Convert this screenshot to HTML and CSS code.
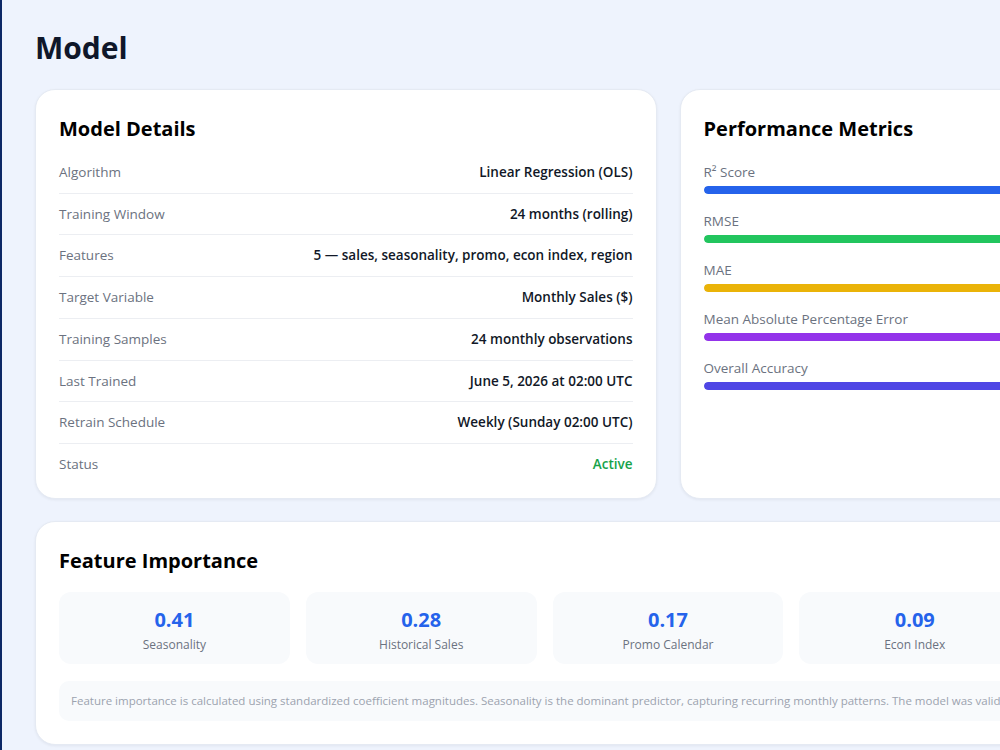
FILE: index.html
```html
<!DOCTYPE html>
<html lang="en">
<head>
    <meta charset="UTF-8">
    <meta name="viewport" content="width=device-width, initial-scale=1.0">
    <title>Model</title>
    <link rel="stylesheet" href="styles.css">
</head>
<body>
    <main class="page">
        <h1 class="page-title">Model</h1>

        <div class="top-grid">
            <!-- Model details -->
            <section class="card">
                <h2 class="card-title">Model Details</h2>
                <div class="detail-list">
                    <div class="detail-row"><span class="detail-label">Algorithm</span><span class="detail-value">Linear Regression (OLS)</span></div>
                    <div class="detail-row"><span class="detail-label">Training Window</span><span class="detail-value">24 months (rolling)</span></div>
                    <div class="detail-row"><span class="detail-label">Features</span><span class="detail-value">5 — sales, seasonality, promo, econ index, region</span></div>
                    <div class="detail-row"><span class="detail-label">Target Variable</span><span class="detail-value">Monthly Sales ($)</span></div>
                    <div class="detail-row"><span class="detail-label">Training Samples</span><span class="detail-value">24 monthly observations</span></div>
                    <div class="detail-row"><span class="detail-label">Last Trained</span><span class="detail-value">June 5, 2026 at 02:00 UTC</span></div>
                    <div class="detail-row"><span class="detail-label">Retrain Schedule</span><span class="detail-value">Weekly (Sunday 02:00 UTC)</span></div>
                    <div class="detail-row"><span class="detail-label">Status</span><span class="detail-value status-active">Active</span></div>
                </div>
            </section>

            <!-- Performance metrics -->
            <section class="card">
                <h2 class="card-title">Performance Metrics</h2>
                <div class="metric-list">
                    <div class="metric">
                        <div class="metric-label">R² Score</div>
                        <div class="metric-track"><div class="metric-fill fill-blue" style="width: 94%"></div></div>
                    </div>
                    <div class="metric">
                        <div class="metric-label">RMSE</div>
                        <div class="metric-track"><div class="metric-fill fill-green" style="width: 88%"></div></div>
                    </div>
                    <div class="metric">
                        <div class="metric-label">MAE</div>
                        <div class="metric-track"><div class="metric-fill fill-yellow" style="width: 90%"></div></div>
                    </div>
                    <div class="metric">
                        <div class="metric-label">Mean Absolute Percentage Error</div>
                        <div class="metric-track"><div class="metric-fill fill-purple" style="width: 92%"></div></div>
                    </div>
                    <div class="metric">
                        <div class="metric-label">Overall Accuracy</div>
                        <div class="metric-track"><div class="metric-fill fill-indigo" style="width: 96%"></div></div>
                    </div>
                </div>
            </section>
        </div>

        <!-- Feature importance -->
        <section class="card card-wide">
            <h2 class="card-title">Feature Importance</h2>
            <div class="feature-grid">
                <div class="feature-box"><div class="feature-value">0.41</div><div class="feature-name">Seasonality</div></div>
                <div class="feature-box"><div class="feature-value">0.28</div><div class="feature-name">Historical Sales</div></div>
                <div class="feature-box"><div class="feature-value">0.17</div><div class="feature-name">Promo Calendar</div></div>
                <div class="feature-box"><div class="feature-value">0.09</div><div class="feature-name">Econ Index</div></div>
                <div class="feature-box"><div class="feature-value">0.05</div><div class="feature-name">Region</div></div>
            </div>
            <p class="feature-note">Feature importance is calculated using standardized coefficient magnitudes. Seasonality is the dominant predictor, capturing recurring monthly patterns. The model was validated on a 6-month holdout.</p>
        </section>
    </main>
</body>
</html>
```

FILE: styles.css
```css
html, body {
    margin: 0;
    overflow: hidden;
}
body {
    font-family: "Open Sans", "Noto Sans", sans-serif;
    background-color: #eef3fd;
    border-left: 2px solid #0c2766;
    color: #111827;
    min-height: 100vh;
}
.page {
    width: 1266px;
    padding: 29px 0 0 33px;
}
.page-title {
    margin: 0 0 22px;
    font-size: 30px;
    line-height: 38px;
    font-weight: 700;
    color: #0f172a;
}
.top-grid {
    display: grid;
    grid-template-columns: 1fr 1fr;
    gap: 23px;
    margin-bottom: 22px;
}
.card {
    background-color: #fff;
    border: 1px solid #e5eaf3;
    border-radius: 20px;
    box-shadow: 0 1px 3px rgba(15, 23, 42, 0.06);
    padding: 24px 23px 23px;
}
.card-title {
    margin: 0 0 8px;
    font-size: 20px;
    line-height: 30px;
    font-weight: 700;
    color: #000;
}
.detail-row {
    display: flex;
    justify-content: space-between;
    align-items: center;
    padding: 10px 0;
    font-size: 13.5px;
    line-height: 20.7px;
    border-bottom: 1px solid #eceef2;
}
.detail-row:last-child {
    border-bottom: none;
    padding-bottom: 0;
}
.detail-label {
    color: #6b7280;
}
.detail-value {
    font-weight: 600;
    color: #111827;
}
.status-active {
    color: #16a34a;
}
.metric-list {
    padding-top: 10px;
}
.metric {
    margin-bottom: 17px;
}
.metric-label {
    font-size: 13.5px;
    line-height: 21px;
    margin-bottom: 3px;
    color: #6b7280;
}
.metric-track {
    height: 8px;
    border-radius: 4px;
    background-color: #eef1f5;
    overflow: hidden;
}
.metric-fill {
    height: 100%;
    border-radius: 4px;
}
.fill-blue { background-color: #2563eb; }
.fill-green { background-color: #22c55e; }
.fill-yellow { background-color: #eab308; }
.fill-purple { background-color: #9333ea; }
.fill-indigo { background-color: #4f46e5; }

.card-wide .card-title {
    margin-bottom: 16px;
}
.feature-grid {
    display: grid;
    grid-template-columns: repeat(5, 1fr);
    gap: 16px;
}
.feature-box {
    background-color: #f8fafc;
    border-radius: 12px;
    padding: 16px 12px 10px;
    text-align: center;
}
.feature-value {
    font-size: 20px;
    line-height: 24px;
    font-weight: 700;
    color: #2563eb;
}
.feature-name {
    margin-top: 4px;
    font-size: 12px;
    line-height: 18px;
    color: #6b7280;
}
.feature-note {
    margin: 17px 0 0;
    background-color: #f8fafc;
    border-radius: 10px;
    padding: 11px 12px;
    font-size: 11.5px;
    line-height: 18px;
    color: #9ca3af;
    white-space: nowrap;
}
```
